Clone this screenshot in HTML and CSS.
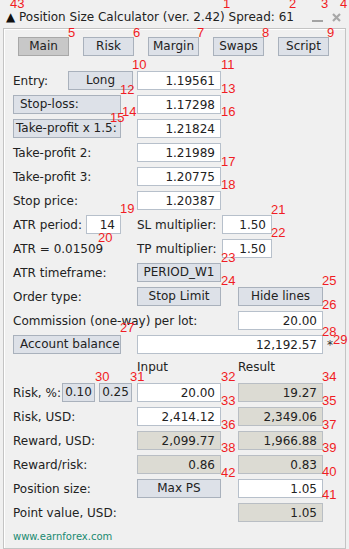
FILE: index.html
```html
<!DOCTYPE html>
<html lang="en">
<head>
    <meta charset="UTF-8">
    <title>Position Size Calculator</title>
    <link rel="stylesheet" href="styles.css">
</head>
<body>
    <div class="title">
        <span class="arrow">▲</span>
        <span class="caption">Position Size Calculator (ver. 2.42) Spread: 61</span>
        <span class="winbtns">
            <svg width="11" height="9" viewBox="0 0 11 9"><rect x="0" y="7" width="11" height="2" fill="#a3a3a3"/></svg>
            <svg width="9" height="9" viewBox="0 0 9 9"><path d="M1 1 L8 8 M8 1 L1 8" stroke="#a8a8a8" stroke-width="2.2"/></svg>
        </span>
    </div>

    <div class="panel">
        <div class="tabs">
            <button class="btn tab active">Main</button>
            <button class="btn tab">Risk</button>
            <button class="btn tab">Margin</button>
            <button class="btn tab">Swaps</button>
            <button class="btn tab">Script</button>
        </div>

        <div class="row">
            <div class="c1"><span>Entry:</span><button class="btn long">Long</button></div>
            <input class="fld c2" value="1.19561">
        </div>
        <div class="row">
            <div class="c1"><button class="btn wide">Stop-loss:</button></div>
            <input class="fld c2" value="1.17298">
        </div>
        <div class="row">
            <div class="c1"><button class="btn wide tight">Take-profit x 1.5:</button></div>
            <input class="fld c2" value="1.21824">
        </div>
        <div class="row">
            <div class="c1">Take-profit 2:</div>
            <input class="fld c2" value="1.21989">
        </div>
        <div class="row">
            <div class="c1">Take-profit 3:</div>
            <input class="fld c2" value="1.20775">
        </div>
        <div class="row">
            <div class="c1">Stop price:</div>
            <input class="fld c2" value="1.20387">
        </div>
        <div class="row">
            <div class="c1"><span>ATR period:</span><input class="fld atr" value="14"></div>
            <span class="mid">SL multiplier:</span>
            <input class="fld mult" value="1.50">
        </div>
        <div class="row">
            <div class="c1">ATR = 0.01509</div>
            <span class="mid">TP multiplier:</span>
            <input class="fld mult" value="1.50">
        </div>
        <div class="row">
            <div class="c1">ATR timeframe:</div>
            <button class="btn c2">PERIOD_W1</button>
        </div>
        <div class="row">
            <div class="c1">Order type:</div>
            <button class="btn c2">Stop Limit</button>
            <button class="btn c3">Hide lines</button>
        </div>
        <div class="row">
            <div class="span2">Commission (one-way) per lot:</div>
            <input class="fld c3 flush" value="20.00">
        </div>
        <div class="row">
            <div class="c1"><button class="btn wide">Account balance</button></div>
            <input class="fld balance" value="12,192.57">
            <span class="star">*</span>
        </div>
        <div class="row head">
            <div class="c1"></div>
            <span class="c2">Input</span>
            <span class="c3">Result</span>
        </div>
        <div class="row">
            <div class="c1"><span>Risk, %:</span><button class="btn pct first">0.10</button><button class="btn pct">0.25</button></div>
            <input class="fld c2" value="20.00">
            <input class="fld ro c3" value="19.27" readonly>
        </div>
        <div class="row">
            <div class="c1">Risk, USD:</div>
            <input class="fld c2" value="2,414.12">
            <input class="fld ro c3" value="2,349.06" readonly>
        </div>
        <div class="row">
            <div class="c1">Reward, USD:</div>
            <input class="fld ro c2" value="2,099.77" readonly>
            <input class="fld ro c3" value="1,966.88" readonly>
        </div>
        <div class="row">
            <div class="c1">Reward/risk:</div>
            <input class="fld ro c2" value="0.86" readonly>
            <input class="fld ro c3" value="0.83" readonly>
        </div>
        <div class="row">
            <div class="c1">Position size:</div>
            <button class="btn c2">Max PS</button>
            <input class="fld c3" value="1.05">
        </div>
        <div class="row">
            <div class="span2">Point value, USD:</div>
            <input class="fld ro c3 flush" value="1.05" readonly>
        </div>
        <div class="site">www.earnforex.com</div>
    </div>

    <div class="marks">
        <span class="mk m43">43</span><span class="mk m1">1</span><span class="mk m2">2</span>
        <span class="mk m3">3</span><span class="mk m4">4</span><span class="mk m5">5</span>
        <span class="mk m6">6</span><span class="mk m7">7</span><span class="mk m8">8</span>
        <span class="mk m9">9</span><span class="mk m10">10</span><span class="mk m11">11</span>
        <span class="mk m12">12</span><span class="mk m13">13</span><span class="mk m14">14</span>
        <span class="mk m15">15</span><span class="mk m16">16</span><span class="mk m17">17</span>
        <span class="mk m18">18</span><span class="mk m19">19</span><span class="mk m20">20</span>
        <span class="mk m21">21</span><span class="mk m22">22</span><span class="mk m23">23</span>
        <span class="mk m24">24</span><span class="mk m25">25</span><span class="mk m26">26</span>
        <span class="mk m27">27</span><span class="mk m28">28</span><span class="mk m29">29</span>
        <span class="mk m30">30</span><span class="mk m31">31</span><span class="mk m32">32</span>
        <span class="mk m33">33</span><span class="mk m34">34</span><span class="mk m35">35</span>
        <span class="mk m36">36</span><span class="mk m37">37</span><span class="mk m38">38</span>
        <span class="mk m39">39</span><span class="mk m40">40</span><span class="mk m41">41</span>
        <span class="mk m42">42</span>
    </div>
</body>
</html>
```

FILE: styles.css
```css
body {
    margin: 0;
    width: 349px;
    height: 549px;
    overflow: hidden;
    position: relative;
    background-color: #f0f0f0;
    font-family: "DejaVu Sans", sans-serif;
    font-size: 12px;
    color: #222;
}

/* window title */
.title {
    display: flex;
    height: 28px;
}

.arrow {
    width: 13px;
    margin-left: 6px;
    padding-top: 10px;
    line-height: 14px;
    color: #111;
}

.caption {
    padding-top: 10px;
    line-height: 14px;
    white-space: nowrap;
}

.winbtns {
    margin-left: auto;
    display: flex;
    gap: 9px;
    padding: 13px 8px 0 0;
}

.winbtns svg {
    display: block;
}

/* main panel */
.panel {
    margin-left: 3px;
    width: 343px;
    height: 521px;
    box-sizing: border-box;
    border: 1px solid #c4c4c4;
    box-shadow: inset 1px 1px 0 #fff;
    padding: 8px 0 0 9px;
}

.tabs {
    display: flex;
    gap: 14px;
    padding-left: 5px;
    margin-bottom: 15px;
}

.btn {
    font: inherit;
    color: #222;
    background-color: #dde1e8;
    border: 1px solid #a9b1bc;
    height: 19px;
    margin: 0;
    padding: 0;
    box-sizing: border-box;
    line-height: 17px;
    text-align: center;
    white-space: nowrap;
}

.tab {
    width: 51px;
}

.tab.active {
    background-color: #c8c8c8;
    border-color: #a8a8a8;
}

.fld {
    font: inherit;
    color: #222;
    background-color: #fff;
    border: 1px solid #b7c0cb;
    height: 19px;
    margin: 0;
    padding: 0 5px 0 0;
    box-sizing: border-box;
    text-align: right;
    outline: none;
}

.fld.ro {
    background-color: #dcdbd3;
    border-color: #b9bec4;
}

.row {
    display: flex;
    align-items: center;
    height: 19px;
    margin-bottom: 5px;
    white-space: nowrap;
}

.c1 {
    width: 124px;
    flex: none;
    display: flex;
    align-items: center;
}

.c2 {
    width: 84px;
    flex: none;
}

.c3 {
    width: 85px;
    flex: none;
    margin-left: 17px;
}

.c3.flush {
    margin-left: 0;
}

.span2 {
    width: 225px;
    flex: none;
}

.long {
    width: 65px;
    margin-left: auto;
    margin-right: 4px;
}

.wide {
    width: 108px;
    text-align: left;
    padding-left: 6px;
}

.wide.tight {
    padding-left: 2px;
}

.atr {
    width: 35px;
    margin-left: auto;
    margin-right: 16px;
}

.mid {
    width: 85px;
    flex: none;
}

.mult {
    width: 50px;
}

.balance {
    width: 186px;
}

.star {
    margin-left: 4px;
    color: #333;
}

.head span {
    line-height: 17px;
    align-self: flex-start;
}

.pct {
    width: 33px;
    margin-right: 5px;
}

.pct.first {
    margin-left: auto;
    margin-right: 4px;
}

.site {
    margin-top: 4px;
    line-height: 19px;
    font-size: 10px;
    color: #1a8a70;
}

/* red annotation numbers over the screenshot */
.marks {
    position: absolute;
    left: 0;
    top: 0;
    width: 349px;
    height: 549px;
    pointer-events: none;
}

.mk {
    position: absolute;
    font-family: "Liberation Sans", Arial, sans-serif;
    font-size: 13px;
    line-height: 13px;
    color: #f01c24;
}

.m43 { left: 10px; top: -3px; }
.m1 { left: 223px; top: -3px; }
.m2 { left: 289px; top: -3px; }
.m3 { left: 321px; top: -3px; }
.m4 { left: 340px; top: -3px; }
.m5 { left: 68px; top: 26px; }
.m6 { left: 133px; top: 26px; }
.m7 { left: 197px; top: 26px; }
.m8 { left: 262px; top: 26px; }
.m9 { left: 327px; top: 26px; }
.m10 { left: 132px; top: 58px; }
.m11 { left: 221px; top: 58px; }
.m12 { left: 120px; top: 83px; }
.m13 { left: 221px; top: 82px; }
.m14 { left: 122px; top: 105px; }
.m15 { left: 110px; top: 111px; }
.m16 { left: 221px; top: 105px; }
.m17 { left: 221px; top: 155px; }
.m18 { left: 221px; top: 178px; }
.m19 { left: 120px; top: 202px; }
.m20 { left: 98px; top: 231px; }
.m21 { left: 271px; top: 203px; }
.m22 { left: 271px; top: 226px; }
.m23 { left: 221px; top: 251px; }
.m24 { left: 221px; top: 274px; }
.m25 { left: 322px; top: 274px; }
.m26 { left: 322px; top: 298px; }
.m27 { left: 120px; top: 321px; }
.m28 { left: 322px; top: 325px; }
.m29 { left: 333px; top: 333px; }
.m30 { left: 95px; top: 370px; }
.m31 { left: 130px; top: 370px; }
.m32 { left: 221px; top: 370px; }
.m33 { left: 221px; top: 394px; }
.m34 { left: 322px; top: 370px; }
.m35 { left: 322px; top: 394px; }
.m36 { left: 221px; top: 418px; }
.m37 { left: 322px; top: 418px; }
.m38 { left: 221px; top: 441px; }
.m39 { left: 322px; top: 441px; }
.m40 { left: 322px; top: 465px; }
.m41 { left: 322px; top: 488px; }
.m42 { left: 221px; top: 466px; }
```
